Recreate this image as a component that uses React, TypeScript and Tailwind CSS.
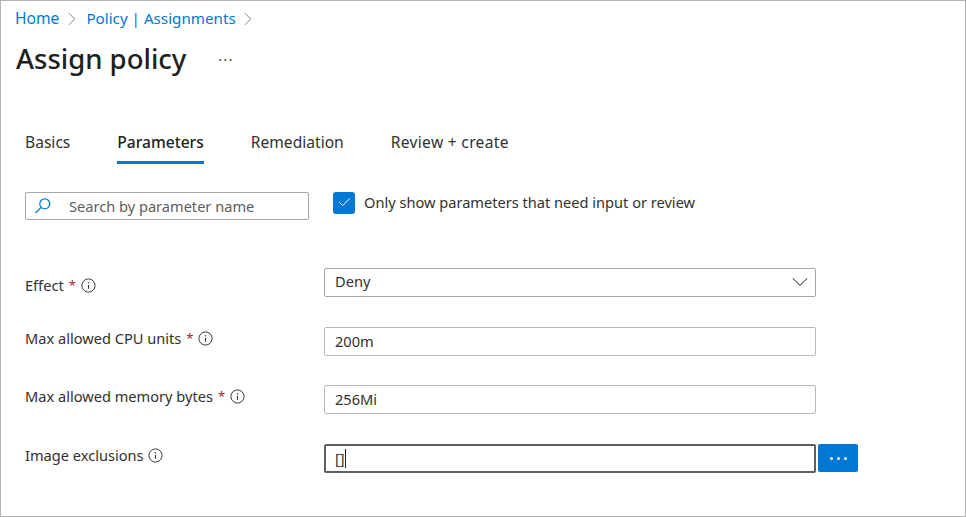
import { useState } from "react";
import { ChevronRight, Check, ChevronDown } from "lucide-react";

const font = "font-['Noto_Sans',sans-serif]";

const InfoIcon = () => (
  <svg width="15" height="15" viewBox="0 0 15 15" fill="none" className="shrink-0">
    <circle cx="7.5" cy="7.5" r="6.6" stroke="#3b3a39" strokeWidth="1" />
    <path d="M7.5 6.8v4" stroke="#3b3a39" strokeWidth="1.1" />
    <circle cx="7.5" cy="4.7" r="0.75" fill="#3b3a39" />
  </svg>
);

const SearchIcon = () => (
  <svg width="18" height="18" viewBox="0 0 18 18" fill="none">
    <circle cx="10.8" cy="6.8" r="5" stroke="#0078d4" strokeWidth="1.2" />
    <path d="M7.2 10.4 1.6 16" stroke="#0078d4" strokeWidth="1.3" />
  </svg>
);

const Label = ({ text, required, className }: { text: string; required?: boolean; className: string }) => (
  <div className={`flex items-center w-[299px] text-[14.6px] text-[#323130] ${className}`}>
    <span>{text}</span>
    {required && <span className="ml-[5px] text-[13px] text-[#a4262c]">*</span>}
    <span className={required ? "ml-[5px]" : "ml-[4px]"}>
      <InfoIcon />
    </span>
  </div>
);

const tabs = ["Basics", "Parameters", "Remediation", "Review + create"];

export default function App() {
  const [onlyInput, setOnlyInput] = useState(true);

  return (
    <div className={`w-[966px] h-[517px] bg-white border border-[#b4b4b4] overflow-hidden text-[#323130] ${font}`}>
      <nav className="flex items-center pl-[14px] pt-[7px] h-[28px] text-[15.6px] text-[#0078d4]">
        <span>Home</span>
        <ChevronRight size={22} strokeWidth={1} className="ml-[2px] mr-[3px] text-[#7a7a7a]" />
        <span className="text-[15.2px]">Policy | Assignments</span>
        <ChevronRight size={22} strokeWidth={1} className="ml-[1px] text-[#7a7a7a]" />
      </nav>

      <div className="flex items-center pl-[15px] mt-[8px] h-[44px]">
        <h1 className="text-[27.5px] font-medium text-[#201f1e] leading-none">Assign policy</h1>
        <span className="ml-[32px] text-[#484644] text-[15px] leading-none tracking-[1px]">···</span>
      </div>

      <div className="flex pl-[24px] mt-[50px] gap-[47px] text-[15.6px] h-[50px]">
        {tabs.map((t) => (
          <div
            key={t}
            className={
              t === "Parameters"
                ? "h-[33px] border-b-[3px] border-[#0078d4] text-[#201f1e] font-medium"
                : t === "Review + create"
                  ? "h-[33px] text-[#323130] tracking-[0.3px]"
                  : "h-[33px] text-[#323130]"
            }
          >
            {t}
          </div>
        ))}
      </div>

      <div className="flex items-center pl-[24px] mt-[11px]">
        <div className="flex items-center w-[284px] h-[28px] border border-[#a6a6a6] rounded-[2px] pl-[8px]">
          <SearchIcon />
          <span className="ml-[17px] mt-[1px] text-[14.6px] text-[#605e5c]">Search by parameter name</span>
        </div>
        <button
          onClick={() => setOnlyInput(!onlyInput)}
          className="ml-[24px] flex items-center justify-center w-[22px] h-[22px] rounded-[3px] bg-[#0078d4] -mt-[7px]"
        >
          {onlyInput && <Check size={15} strokeWidth={1.6} className="text-white" />}
        </button>
        <span className="ml-[9px] text-[14.6px] text-[#323130] -mt-[7px]">Only show parameters that need input or review</span>
      </div>

      <div className="flex flex-col pl-[24px] mt-[48px]">
        <div className="flex items-start h-[59px]">
          <Label text="Effect" required className="mt-[7px]" />
          <div className="flex items-center justify-between w-[492px] h-[29px] border border-[#a6a6a6] rounded-[2px] pl-[10px] pr-[1px] pb-[2px] text-[14.6px]">
            <span>Deny</span>
            <ChevronDown size={28} strokeWidth={0.9} className="text-[#484644]" />
          </div>
        </div>
        <div className="flex items-start h-[58px]">
          <Label text="Max allowed CPU units" required className="mt-[1px]" />
          <div className="flex items-center w-[492px] h-[29px] border border-[#b8b8b8] rounded-[2px] pl-[10px] text-[14.6px]">
            200m
          </div>
        </div>
        <div className="flex items-start h-[59px]">
          <Label text="Max allowed memory bytes" required className="mt-[1px]" />
          <div className="flex items-center w-[492px] h-[29px] border border-[#b8b8b8] rounded-[2px] pl-[10px] text-[14.6px]">
            256Mi
          </div>
        </div>
        <div className="flex items-start">
          <Label text="Image exclusions" className="mt-[1px]" />
          <div className="flex items-center w-[492px] h-[29px] border-2 border-[#605e5c] rounded-[2px] pl-[9px] text-[14.6px]">
            <span>[]</span>
            <span className="w-px h-[19px] bg-[#201f1e]" />
          </div>
          <button className="ml-[2px] flex items-center justify-center gap-[4px] w-[40px] h-[28px] rounded-[2px] bg-[#0078d4]">
            <span className="w-[3px] h-[3px] rounded-full bg-white" />
            <span className="w-[3px] h-[3px] rounded-full bg-white" />
            <span className="w-[3px] h-[3px] rounded-full bg-white" />
          </button>
        </div>
      </div>
    </div>
  );
}
